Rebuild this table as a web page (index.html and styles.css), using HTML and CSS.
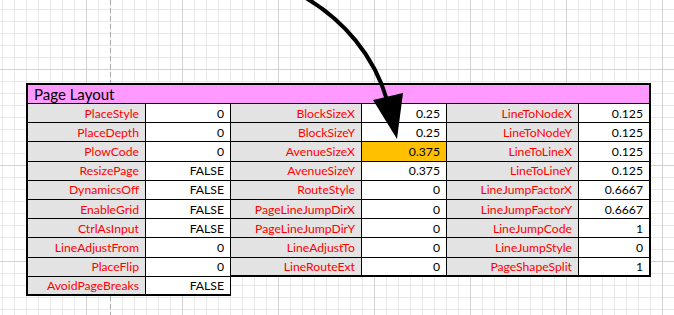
FILE: index.html
```html
<!DOCTYPE html>
<html lang="en">
<head>
<meta charset="utf-8">
<title>Page Layout</title>
<link rel="stylesheet" href="styles.css">
</head>
<body>
<div class="canvas">
  <div class="sheet">
    <div class="hdr">Page Layout</div>

    <div class="lbl first">PlaceStyle</div><div class="val">0</div>
    <div class="lbl">BlockSizeX</div><div class="val">0.25</div>
    <div class="lbl">LineToNodeX</div><div class="val last">0.125</div>

    <div class="lbl first">PlaceDepth</div><div class="val">0</div>
    <div class="lbl">BlockSizeY</div><div class="val">0.25</div>
    <div class="lbl">LineToNodeY</div><div class="val last">0.125</div>

    <div class="lbl first">PlowCode</div><div class="val">0</div>
    <div class="lbl">AvenueSizeX</div><div class="val hl">0.375</div>
    <div class="lbl">LineToLineX</div><div class="val last">0.125</div>

    <div class="lbl first">ResizePage</div><div class="val">FALSE</div>
    <div class="lbl">AvenueSizeY</div><div class="val">0.375</div>
    <div class="lbl">LineToLineY</div><div class="val last">0.125</div>

    <div class="lbl first">DynamicsOff</div><div class="val">FALSE</div>
    <div class="lbl">RouteStyle</div><div class="val">0</div>
    <div class="lbl">LineJumpFactorX</div><div class="val last">0.6667</div>

    <div class="lbl first">EnableGrid</div><div class="val">FALSE</div>
    <div class="lbl">PageLineJumpDirX</div><div class="val">0</div>
    <div class="lbl">LineJumpFactorY</div><div class="val last">0.6667</div>

    <div class="lbl first">CtrlAsInput</div><div class="val">FALSE</div>
    <div class="lbl">PageLineJumpDirY</div><div class="val">0</div>
    <div class="lbl">LineJumpCode</div><div class="val last">1</div>

    <div class="lbl first">LineAdjustFrom</div><div class="val">0</div>
    <div class="lbl">LineAdjustTo</div><div class="val">0</div>
    <div class="lbl">LineJumpStyle</div><div class="val last">0</div>

    <div class="lbl first">PlaceFlip</div><div class="val">0</div>
    <div class="lbl bottom">LineRouteExt</div><div class="val bottom">0</div>
    <div class="lbl bottom">PageShapeSplit</div><div class="val last bottom">1</div>

    <div class="lbl first bottom">AvoidPageBreaks</div><div class="val bottom">FALSE</div>
  </div>

  <svg class="arrow" width="674" height="315" viewBox="0 0 674 315" aria-hidden="true">
    <path d="M306 -2 C 343 20, 374 55, 387 100" fill="none" stroke="#000" stroke-width="4"/>
    <polygon points="373,100 403,93 397,139" fill="#000"/>
  </svg>
</div>
</body>
</html>
```
FILE: styles.css
```css
html, body {
  margin: 0;
  padding: 0;
}

body {
  width: 674px;
  height: 315px;
  overflow: hidden;
  background-color: #fff;
  background-image:
    repeating-linear-gradient(to bottom, #a8a8a8 0 5px, transparent 5px 8px),
    linear-gradient(to right, #d2d2d2 1px, transparent 1px),
    linear-gradient(to bottom, #d2d2d2 1px, transparent 1px),
    linear-gradient(to right, #e8e8e8 1px, transparent 1px),
    linear-gradient(to bottom, #e8e8e8 1px, transparent 1px);
  background-size:
    1px 8px,
    96px 100%,
    100% 96px,
    12px 100%,
    100% 12px;
  background-position:
    110px 0,
    86px 0,
    0 69px,
    2px 0,
    0 9px;
  background-repeat:
    repeat-y,
    repeat,
    repeat,
    repeat,
    repeat;
}

.canvas {
  position: relative;
  width: 674px;
  height: 315px;
  box-sizing: border-box;
  padding: 83px 0 0 26px;
}

.sheet {
  display: grid;
  grid-template-columns: 120px 85px 131px 85px 132px 72px;
  grid-template-rows: 21px repeat(10, 19.2px);
  width: 625px;
  font-family: Lato, "Liberation Sans", sans-serif;
  font-size: 12.2px;
}

.sheet > div {
  box-sizing: border-box;
  border-right: 1px solid #000;
  border-bottom: 1px solid #000;
  display: flex;
  align-items: center;
  justify-content: flex-end;
  padding: 0 6px 0 4px;
  white-space: nowrap;
}

.hdr {
  grid-column: 1 / -1;
  background: #ff99ff;
  color: #000;
  font-size: 15px;
  justify-content: flex-start !important;
  padding: 0 0 0 6px !important;
  border-top: 2px solid #000;
  border-left: 2px solid #000;
  border-right: 2px solid #000 !important;
}

.lbl {
  background: #e3e3e3;
  color: #ff0000;
}

.val {
  background: #fff;
  color: #000;
}

.val.hl {
  background: #ffc000;
}

.first {
  border-left: 2px solid #000;
}

.last {
  border-right: 2px solid #000 !important;
}

.bottom {
  border-bottom: 2px solid #000 !important;
}

.arrow {
  position: absolute;
  left: 0;
  top: 0;
  pointer-events: none;
}
```
